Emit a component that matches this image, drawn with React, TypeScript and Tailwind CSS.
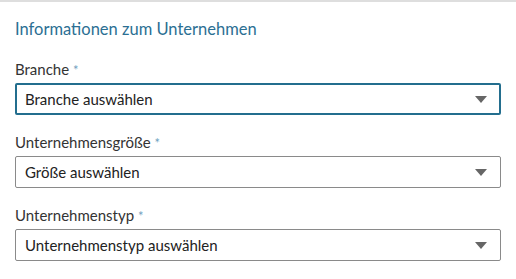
import React from "react";

function Caret() {
  return (
    <svg width="12" height="7" viewBox="0 0 12 7" className="shrink-0">
      <path d="M0 0 L12 0 L6 7 Z" fill="#666666" />
    </svg>
  );
}

function Field({ label, placeholder, focused }: { label: string; placeholder: string; focused?: boolean }) {
  return (
    <div className="flex flex-col">
      <div className="text-[15px] leading-[18px] text-[#333333]">
        {label} <span className="text-[13px] text-[#6f9fc0]">*</span>
      </div>
      <div
        className={
          focused
            ? "mt-[4px] flex h-[32px] items-center justify-between rounded-[2px] border-2 border-[#236e8e] pl-[8px] pr-[12px]"
            : "mt-[4px] flex h-[32px] items-center justify-between rounded-[2px] border border-[#8a8a8a] pl-[9px] pr-[13px]"
        }
      >
        <span className="text-[15px] text-[#222222]">{placeholder}</span>
        <Caret />
      </div>
    </div>
  );
}

export default function App() {
  return (
    <div
      className="h-[279px] w-[516px] overflow-hidden bg-white"
      style={{ fontFamily: 'Lato, "Open Sans", sans-serif' }}
    >
      <div className="h-[2px] w-full bg-[#dedede]" />
      <div className="px-[15px]">
        <h2 className="mt-[16px] text-[16.5px] leading-[22px] text-[#2b6f93]">Informationen zum Unternehmen</h2>
        <div className="mt-[20px] flex flex-col gap-[18px]">
          <Field label="Branche" placeholder="Branche auswählen" focused />
          <Field label="Unternehmensgröße" placeholder="Größe auswählen" />
          <Field label="Unternehmenstyp" placeholder="Unternehmenstyp auswählen" />
        </div>
      </div>
    </div>
  );
}
